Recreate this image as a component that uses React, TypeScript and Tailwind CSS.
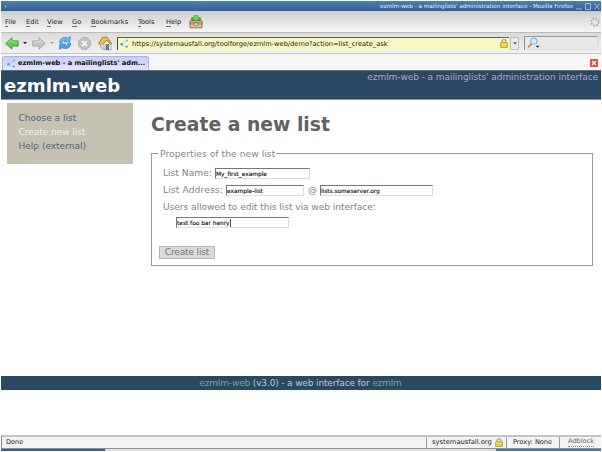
import React from "react";

const ezIcon = (
  <svg className="h-[9px] w-[9px] shrink-0" viewBox="0 0 9 9">
    <path d="M7 1 L1.5 5.5 L6.5 8" fill="none" stroke="#9fcdeb" strokeWidth="0.8" />
    <circle cx="7" cy="1.6" r="1" fill="#62b0e4" />
    <circle cx="1.6" cy="5.3" r="1.3" fill="#45a0de" />
    <circle cx="6.8" cy="7.6" r="1.1" fill="#45a0de" />
  </svg>
);

function Lock() {
  return (
    <svg className="h-[9px] w-[8px] shrink-0" viewBox="0 0 8 9">
      <path d="M2 4.5 V2.7 A2 2 0 0 1 6 2.7 V4.5" fill="none" stroke="#a09a80" strokeWidth="1.2" />
      <rect x="0.5" y="3.8" width="7" height="4.7" rx="0.5" fill="#f2d231" stroke="#b99a28" strokeWidth="0.8" />
      <path d="M1.3 5.2 H6.7" stroke="#fbf0a0" strokeWidth="0.7" />
    </svg>
  );
}

function Arrow({ green }: { green?: boolean }) {
  return (
    <svg className={green ? "h-[13px] w-[14px] shrink-0" : "h-[13px] w-[14px] shrink-0 -scale-x-100"} viewBox="0 0 14 13">
      <path
        d="M0.7 6.5 L7 0.8 V3.9 H13.2 V9 H7 V12.2 Z"
        fill={green ? "#5fd04b" : "#c6c6c6"}
        stroke={green ? "#2c9a2a" : "#a2a2a2"}
        strokeWidth="0.9"
        strokeLinejoin="round"
      />
      <path d="M2.5 6.2 L6.3 2.8 V4.9 H12.2" fill="none" stroke={green ? "#a9ee96" : "#e2e2e2"} strokeWidth="0.8" />
    </svg>
  );
}

function MenuItem({ label, className }: { label: string; className: string }) {
  return (
    <span className={`shrink-0 ${className}`}>
      <span className="border-b border-[#666]">{label[0]}</span>
      {label.slice(1)}
    </span>
  );
}

function Field({ value, className, caret }: { value: string; className: string; caret?: boolean }) {
  return (
    <span
      className={`flex h-[11px] shrink-0 items-center border border-t-[#777] border-r-[#ddd] border-b-[#ddd] border-l-[#777] bg-white pt-px text-[5.85px] leading-[8px] text-black [-webkit-text-stroke:0.1px_#000] ${className}`}
    >
      {value}
      {caret && <span className="h-[8px] w-px bg-[#555]" />}
    </span>
  );
}

export default function App() {
  return (
    <div className="flex h-[452px] w-[602px] flex-col overflow-hidden bg-white pt-px pr-px pl-px font-['DejaVu_Sans',sans-serif] whitespace-nowrap">
      <div className="flex h-[10px] shrink-0 items-center bg-linear-to-b from-[#4b80b5] to-[#355d8b] text-[5.67px] leading-[10px] text-[#e8eef5]">
        <span className="ml-1 h-px w-px bg-white" />
        <span className="ml-auto">ezmlm-web - a mailinglists' administration interface - Mozilla Firefox</span>
        <svg className="ml-[3px] h-[9px] w-[25px] shrink-0" viewBox="0 0 25 9">
          <path d="M0 7 H6 M9.5 1.5 H14.5 V7.5 H9.5 Z M18.5 1.5 L23.5 7.5 M23.5 1.5 L18.5 7.5" fill="none" stroke="#a9c6e4" strokeWidth="0.9" />
        </svg>
      </div>

      <div className="flex h-[22px] shrink-0 items-center border-t border-b border-t-[#c9ccd0] border-b-[#bbb] bg-linear-to-b from-[#cfcfcf] to-[#f7f7f7] pl-[4px] text-[6.65px] leading-[8px] text-[#222]">
        <MenuItem label="File" className="w-[21px]" />
        <MenuItem label="Edit" className="w-[21px]" />
        <MenuItem label="View" className="w-[25px]" />
        <MenuItem label="Go" className="w-[19px]" />
        <MenuItem label="Bookmarks" className="w-[47px]" />
        <MenuItem label="Tools" className="w-[28px]" />
        <MenuItem label="Help" className="w-[23px]" />
        <svg className="mb-px h-[14px] w-[14px] shrink-0" viewBox="0 0 14 14">
          <path d="M1 6.5 L3 3 H11 L13 6.5 V12.8 H1 Z" fill="#d9c096" stroke="#7d6238" strokeWidth="0.8" />
          <path d="M2 6 L3.6 3.8 H10.4 L12 6 Z" fill="#8a6d40" />
          <path d="M0.6 7.2 H13.4 V9 H0.6 Z" fill="#c9a873" stroke="#7d6238" strokeWidth="0.5" />
          <rect x="5.5" y="8" width="3" height="2.2" fill="#f0dfb8" stroke="#765631" strokeWidth="0.4" />
          <path d="M5 0.5 H9 V2.6 H11.5 L7 6.2 L2.5 2.6 H5 Z" fill="#5fdc5a" stroke="#2f9a35" strokeWidth="0.5" />
        </svg>
        <svg className="mr-px ml-auto h-[10px] w-[10px] shrink-0" viewBox="0 0 10 10">
          <circle cx="5" cy="5" r="3.7" fill="none" stroke="#aaa" strokeWidth="1.6" strokeDasharray="1.7 1.2" />
        </svg>
      </div>

      <div className="flex h-[21px] shrink-0 items-center border-b border-[#c4c4c4] bg-linear-to-b from-[#dcdcdc] to-[#f2f2f2] pl-[4px]">
        <Arrow green />
        <span className="ml-[4px] h-0 w-0 border-x-[2px] border-t-[2px] border-x-transparent border-t-black" />
        <span className="ml-[5px] flex"><Arrow /></span>
        <span className="ml-[4px] h-0 w-0 border-x-[2px] border-t-[2px] border-x-transparent border-t-[#999]" />
        <svg className="ml-[4px] h-[14px] w-[14px] shrink-0" viewBox="0 0 14 14">
          <path d="M1.6 6.6 C1.6 2.6 5.6 0.4 9.8 2.2 L12.4 0.8 L11.6 6.2 L6.2 5.6 L7.8 4.4 C6 3.8 4.6 4.6 4.2 6.6 Z" fill="#6dbcf2" stroke="#2a74c0" strokeWidth="0.7" strokeLinejoin="round" />
          <path d="M12.8 7.4 C12.8 11.4 8.6 13.6 4.4 11.8 L1.4 13.2 L2 7.8 L7.8 8.2 L6 9.6 C8 10.2 9.6 9.4 10 7.4 Z" fill="#4ea2ea" stroke="#2a74c0" strokeWidth="0.7" strokeLinejoin="round" />
        </svg>
        <svg className="ml-[6px] h-[13px] w-[13px] shrink-0" viewBox="0 0 13 13">
          <path d="M4 0.6 H9 L12.4 4 V9 L9 12.4 H4 L0.6 9 V4 Z" fill="#c2c2c2" stroke="#a8a8a8" strokeWidth="0.8" />
          <path d="M4 4 L9 9 M9 4 L4 9" stroke="#fff" strokeWidth="1.6" />
        </svg>
        <svg className="ml-[7px] h-[15px] w-[14px] shrink-0" viewBox="0 0 14 15">
          <path d="M2.5 7.5 L6.5 13.8 H13 V7 L9.5 4 L5 5 Z" fill="#f3f1ea" stroke="#8d8676" strokeWidth="0.6" />
          <path d="M0.5 7.6 L4.6 1.2 H9.2 L13.6 7.4 L12.4 8.2 L8.6 4 L4.2 9.2 Z" fill="#edbf52" stroke="#7c5a24" strokeWidth="0.7" strokeLinejoin="round" />
          <path d="M2.5 8.6 V11.6 L6 13.8 V8" fill="#dcd8cc" stroke="#8d8676" strokeWidth="0.5" />
          <rect x="8" y="8.6" width="2.8" height="5" fill="#5f86b8" stroke="#3c5270" strokeWidth="0.5" />
        </svg>
        <div className="ml-[5px] flex h-[13px] w-[392px] shrink-0 items-center border-t border-l border-t-[#5c5c50] border-l-[#444] bg-[#f8f7bf] pr-px pl-[2px] text-[6.66px] leading-[9px] text-[#222]">
          {ezIcon}
          <span className="ml-[3px] pt-px">https://systemausfall.org/toolforge/ezmlm-web/demo?action=list_create_ask</span>
          <span className="ml-auto flex"><Lock /></span>
        </div>
        <div className="ml-[1px] flex h-[13px] w-[9px] shrink-0 items-center justify-center rounded-[1px] border border-[#bbb] bg-[#ededed]">
          <span className="h-0 w-0 border-x-[2.5px] border-t-[3px] border-x-transparent border-t-[#2c8caa]" />
        </div>
        <div className="ml-[5px] flex h-[14px] w-[74px] shrink-0 items-center border border-t-[#999] border-r-[#ddd] border-b-[#ddd] border-l-[#888] bg-[#e9e9e9] pl-[2px]">
          <svg className="h-[12px] w-[13px]" viewBox="0 0 13 12">
            <path d="M1 10.3 L4.8 6.6" stroke="#d08a4a" strokeWidth="1.8" />
            <circle cx="6.8" cy="4.2" r="3.1" fill="#d8effb" stroke="#7db4e0" strokeWidth="1.1" />
            <path d="M8.8 8.8 H12.4 L10.6 10.8 Z" fill="#111" />
          </svg>
        </div>
      </div>

      <div className="flex h-[16px] shrink-0 items-end bg-[#f7f7f7] pl-px">
        <div className="flex h-[14px] w-[147px] shrink-0 items-center rounded-t-[3px] border border-b-0 border-[#aeb3dc] bg-linear-to-b from-[#c8cef5] to-[#e3e5fa] pl-[4px] text-[6.6px] leading-[9px] font-bold text-[#111]">
          {ezIcon}
          <span className="ml-[2px]">ezmlm-web - a mailinglists' adm...</span>
        </div>
        <div className="mr-[3px] mb-[3px] ml-auto flex h-[8px] w-[8px] items-center justify-center rounded-[1px] bg-[#d9503f]">
          <svg className="h-[6px] w-[6px]" viewBox="0 0 6 6">
            <path d="M1 1 L5 5 M5 1 L1 5" stroke="#fff" strokeWidth="1.3" />
          </svg>
        </div>
      </div>

      <header className="flex h-[30px] shrink-0 items-start border-t border-b border-t-[#5d6c78] border-b-[#8696a5] bg-[#284864]">
        <h1 className="ml-[3px] text-[18.1px] leading-[29px] font-bold text-white">ezmlm-web</h1>
        <span className="mr-[3px] ml-auto text-[9px] leading-[12px] tracking-[-0.07px] text-[#b3a3cd]">ezmlm-web - a mailinglists' administration interface</span>
      </header>

      <div className="flex h-[276px] shrink-0">
        <nav className="mt-[3px] ml-[6px] h-[61px] w-[126px] shrink-0 bg-[#c6c2b2] pt-[8px] pl-[11.5px] text-[9px] leading-[14px] text-[#4e6478]">
          <div>Choose a list</div>
          <div className="tracking-[-0.05px] text-[#f1f0ea]">Create new list</div>
          <div>Help (external)</div>
        </nav>
        <main className="ml-[18px] w-[442px] shrink-0 text-[9.15px] leading-[12px] text-[#858585]">
          <h2 className="mt-[12px] text-[18.8px] leading-[26px] font-bold text-[#616161]">Create a new list</h2>
          <fieldset className="mt-[9px] h-[119px] border border-[#999] pl-[7px]">
            <legend className="-ml-[1px] pt-[2px] pr-px pl-[2px] leading-[10px] tracking-[0.06px]">Properties of the new list</legend>
            <div className="mt-[8px] ml-[4px] flex h-[12px] items-center">
              <span className="w-[52px] shrink-0">List Name:</span>
              <Field value="My_first_example" className="mt-px w-[95px]" />
            </div>
            <div className="mt-[5px] ml-[4px] flex h-[12px] items-center">
              <span className="w-[63px] shrink-0 tracking-[0.12px]">List Address:</span>
              <Field value="example-list" className="mt-px w-[78px]" />
              <span className="ml-[4px] w-[12px]">@</span>
              <Field value="lists.someserver.org" className="mt-px w-[113px]" />
            </div>
            <div className="mt-[5px] ml-[4px] tracking-[-0.08px]">Users allowed to edit this list via web interface:</div>
            <div className="mt-[4px] ml-[17px]">
              <Field value="test foo bar henry" className="w-[113px]" caret />
            </div>
            <button className="mt-[18px] block h-[13px] w-[56px] border border-[#b5b5b5] bg-[#dcdadc] leading-[11px] tracking-[-0.2px] text-[#777]">Create list</button>
          </fieldset>
        </main>
      </div>

      <footer className="h-[14px] shrink-0 bg-[#284864] pr-px text-center text-[9px] leading-[14px] tracking-[-0.15px] text-[#c2cad6]">
        <span className="text-[#74a596]">ezmlm-web</span> (v3.0) - a web interface for <span className="text-[#74a596]">ezmlm</span>
      </footer>

      <div className="mt-[45px] flex h-[14px] shrink-0 items-stretch border-t-2 border-b border-l border-t-[#c4c4c4] border-b-[#8d929b] border-l-[#888] bg-[#f3f3f3] text-[6.6px] leading-[11px] text-[#222]">
        <span className="pl-[4px]">Done</span>
        <span className="ml-auto flex w-[80px] items-center justify-between border-l border-[#999] pr-[3px] pl-[5px] text-[6.75px]">
          systemausfall.org <Lock />
        </span>
        <span className="w-[53px] border-l border-[#999] pl-[6px]">Proxy: None</span>
        <span className="flex w-[42px] items-start border-l border-[#999] pl-[8px] text-[#666]">
          <span className="border-b border-dotted border-[#888] leading-[9px]">Adblock</span>
        </span>
      </div>
      <div className="flex h-[2px] shrink-0 bg-[#dde1e5]">
        <span className="w-[104px] bg-[#365f8c]" />
        <span className="ml-auto w-[105px] bg-[#4677ab]" />
      </div>
    </div>
  );
}
